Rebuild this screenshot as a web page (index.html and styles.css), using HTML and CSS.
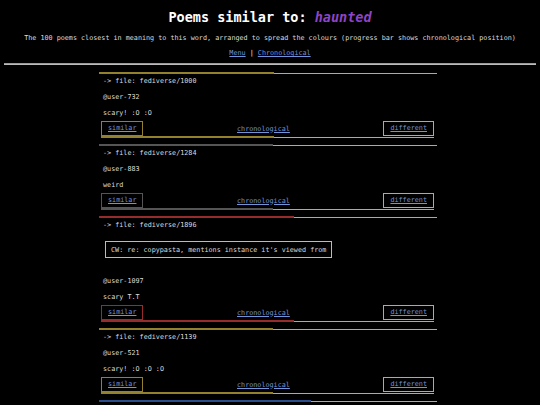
FILE: index.html
```html
<!DOCTYPE html>
<html lang="en">
<head>
    <meta charset="UTF-8">
    <meta name="viewport" content="width=device-width, initial-scale=1.0">
    <title>Poems similar to: haunted</title>
    <link rel="stylesheet" href="styles.css">
</head>
<body>
    <h1 class="title">Poems similar to: <em class="word">haunted</em></h1>
    <p class="subtitle">The 100 poems closest in meaning to this word, arranged to spread the colours (progress bar shows chronological position)</p>
    <p class="menu"><a href="#">Menu</a> | <a href="#">Chronological</a></p>
    <hr class="rule">

    <div class="feed">
        <div class="poem gold">
            <div class="track"><div class="fill" style="width: 51.8%"></div></div>
            <p class="file">-&gt; file: fediverse/1000</p>
            <p class="line">@user-732</p>
            <p class="line">scary! :O :O</p>
            <div class="poem-nav">
                <div class="nav-links">
                    <a href="#" class="box similar">similar</a>
                    <a href="#">chronological</a>
                    <a href="#" class="box different">different</a>
                </div>
                <div class="track"><div class="fill" style="width: 52%"></div></div>
            </div>
        </div>

        <div class="poem grey">
            <div class="track"><div class="fill" style="width: 51.5%"></div></div>
            <p class="file">-&gt; file: fediverse/1284</p>
            <p class="line">@user-883</p>
            <p class="line">weird</p>
            <div class="poem-nav">
                <div class="nav-links">
                    <a href="#" class="box similar">similar</a>
                    <a href="#">chronological</a>
                    <a href="#" class="box different">different</a>
                </div>
                <div class="track"><div class="fill" style="width: 51.7%"></div></div>
            </div>
        </div>

        <div class="poem red">
            <div class="track"><div class="fill" style="width: 57.7%"></div></div>
            <p class="file">-&gt; file: fediverse/1896</p>
            <div class="cw">CW: re: copypasta, mentions instance it's viewed from</div>
            <p class="line">@user-1097</p>
            <p class="line">scary T.T</p>
            <div class="poem-nav">
                <div class="nav-links">
                    <a href="#" class="box similar">similar</a>
                    <a href="#">chronological</a>
                    <a href="#" class="box different">different</a>
                </div>
                <div class="track"><div class="fill" style="width: 58%"></div></div>
            </div>
        </div>

        <div class="poem gold">
            <div class="track"><div class="fill" style="width: 51.5%"></div></div>
            <p class="file">-&gt; file: fediverse/1139</p>
            <p class="line">@user-521</p>
            <p class="line">scary! :O :O :O</p>
            <div class="poem-nav">
                <div class="nav-links">
                    <a href="#" class="box similar">similar</a>
                    <a href="#">chronological</a>
                    <a href="#" class="box different">different</a>
                </div>
                <div class="track"><div class="fill" style="width: 51.7%"></div></div>
            </div>
        </div>

        <div class="poem blue">
            <div class="track"><div class="fill" style="width: 62.7%"></div></div>
        </div>
    </div>
</body>
</html>
```

FILE: styles.css
```css
body {
    margin: 0;
    padding: 4px;
    background-color: #000;
    color: #ddd;
    font-family: "DejaVu Sans Mono", monospace;
    font-size: 6.75px;
    line-height: 8px;
}

a {
    color: #7393d9;
}

.title {
    margin: 5px 0 0;
    text-align: center;
    font-size: 13.5px;
    line-height: 16px;
    color: #fff;
}

.word {
    color: #8e44c9;
}

.subtitle {
    margin: 9px 0 0;
    text-align: center;
}

.menu {
    margin: 7px 0 0;
    text-align: center;
    color: #fff;
}

.rule {
    margin: 6px 0 0;
    height: 0;
    border: none;
    border-top: 1px solid #999;
    border-bottom: 1px solid #bbb;
}

.feed {
    width: 338px;
    margin: 7px auto 0;
    padding-right: 4px;
}

.poem {
    margin-bottom: 6px;
}

/* colour of each poem: progress fill and "similar" border */
.gold { --c: #94812e; }
.grey { --c: #555; }
.red { --c: #972c2c; }
.blue { --c: #2c4d8c; }

.track {
    height: 2px;
    background: linear-gradient(transparent 1px, #aaa 1px);
}

.fill {
    height: 2px;
    background-color: var(--c);
}

.file, .line {
    margin: 8px 0 0;
    padding-left: 4px;
}

.poem .file {
    margin-top: 3px;
}

.cw {
    width: fit-content;
    margin: 12px 0 19px 6px;
    padding: 4px 5px 3px;
    border: 1px solid #bbb;
}

.poem-nav {
    margin: 4px 3px 0 2px;
}

.nav-links {
    display: flex;
    justify-content: space-between;
    align-items: center;
}

.box {
    padding: 2px 6px;
    line-height: 9px;
    border: 1px solid #aaa;
}

.similar {
    border-color: var(--c);
}
```
